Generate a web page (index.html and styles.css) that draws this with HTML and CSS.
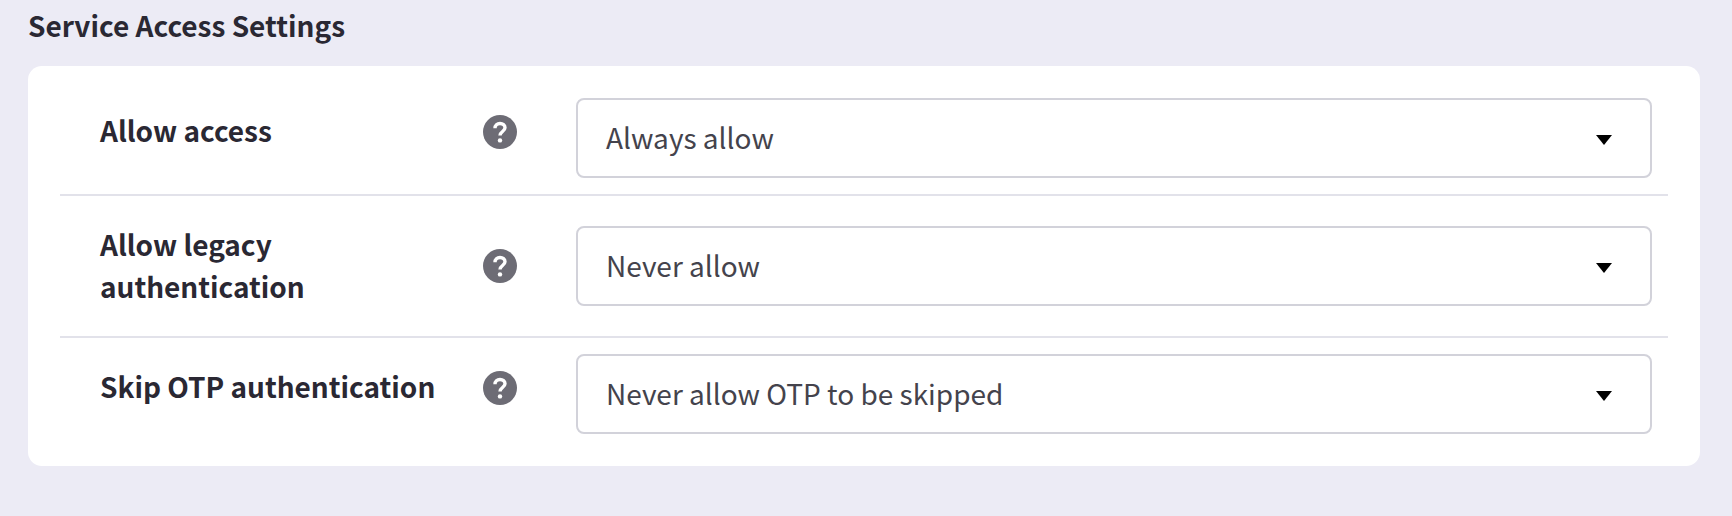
FILE: index.html
```html
<!DOCTYPE html>
<html lang="en">
<head>
  <meta charset="utf-8">
  <title>Service Access Settings</title>
  <link rel="stylesheet" href="styles.css">
</head>
<body>
  <svg class="sprite" width="0" height="0">
    <symbol id="help" viewBox="0 0 34 34">
      <circle cx="17" cy="17" r="17"/>
      <path d="M12 13.2c0-2.9 2.2-4.7 5-4.7s5 1.7 5 4.3c0 3.6-5 3.8-5 7.6" fill="none" stroke="#fff" stroke-width="3.4"/>
      <circle cx="17" cy="25.4" r="2.2" fill="#fff"/>
    </symbol>
  </svg>

  <h2 class="titulo">Service Access Settings</h2>

  <div class="card">
    <div class="fila">
      <div class="etiqueta">
        <label>Allow access</label>
        <svg class="ayuda"><use href="#help"></use></svg>
      </div>
      <div class="selector"><span>Always allow</span><i class="flecha"></i></div>
    </div>
    <div class="fila">
      <div class="etiqueta">
        <label>Allow legacy authentication</label>
        <svg class="ayuda"><use href="#help"></use></svg>
      </div>
      <div class="selector"><span>Never allow</span><i class="flecha"></i></div>
    </div>
    <div class="fila">
      <div class="etiqueta">
        <label>Skip OTP authentication</label>
        <svg class="ayuda"><use href="#help"></use></svg>
      </div>
      <div class="selector"><span>Never allow OTP to be skipped</span><i class="flecha"></i></div>
    </div>
  </div>
</body>
</html>
```

FILE: styles.css
```css
* {
  margin: 0;
  padding: 0;
  box-sizing: border-box;
  font-family: "Noto Sans CJK SC", "Noto Sans", sans-serif;
}

body {
  background: #ecebf5;
  padding: 4px 32px 0 28px;
  height: 516px;
  overflow: hidden;
}

.sprite {
  display: block;
}

.titulo {
  font-size: 28px;
  line-height: 42px;
  font-weight: 700;
  color: #2a2833;
  margin-bottom: 20px;
}

.card {
  background: #fff;
  border-radius: 14px;
  padding: 16px 32px;
}

.fila {
  display: flex;
  align-items: flex-start;
  padding: 16px 16px 16px 40px;
  border-bottom: 2px solid #e2e2ea;
}

.fila:last-child {
  border-bottom: none;
}

.etiqueta {
  display: flex;
  align-items: center;
  width: 476px;
  flex-shrink: 0;
}

.etiqueta label {
  width: 383px;
  padding: 11px 30px 13px 0;
  font-size: 28px;
  line-height: 42px;
  font-weight: 700;
  color: #2a2833;
}

.ayuda {
  width: 34px;
  height: 34px;
  margin-top: 1px;
  fill: #6d6c75;
}

.fila:nth-child(2) .ayuda {
  margin-top: 0;
}

.selector {
  flex: 1;
  align-self: center;
  height: 80px;
  display: flex;
  align-items: center;
  justify-content: space-between;
  padding: 0 38px 0 28px;
  border: 2px solid #d2d2da;
  border-radius: 8px;
  font-size: 28px;
  color: #44434c;
}

.selector span {
  margin-bottom: 2px;
}

.flecha {
  width: 0;
  height: 0;
  margin-top: 3px;
  border-left: 8px solid transparent;
  border-right: 8px solid transparent;
  border-top: 10px solid #000;
}
```
